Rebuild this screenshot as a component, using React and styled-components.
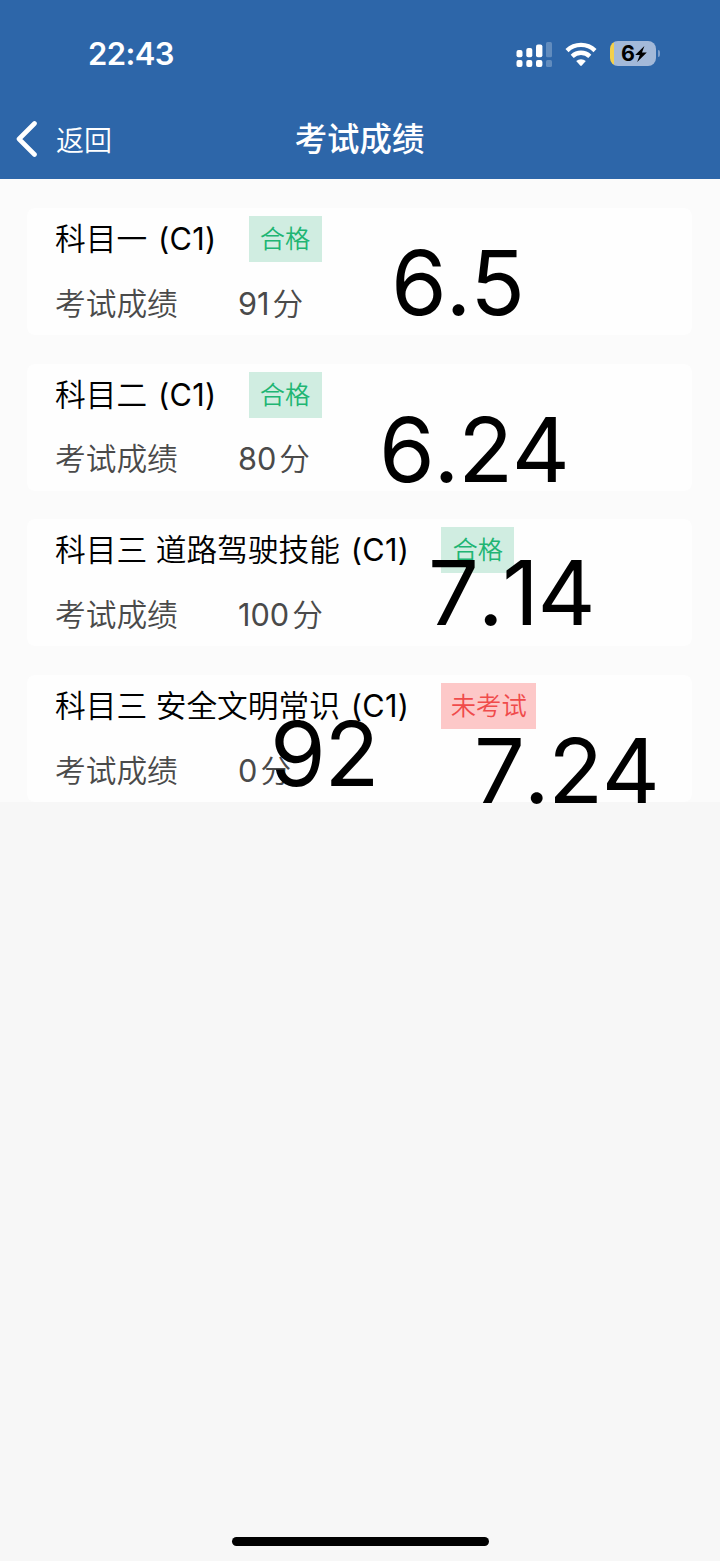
import React from 'react'
import styled, {createGlobalStyle} from 'styled-components'

const exams=[
    {
        subject:"科目一",
        type:"(C1)",
        score:91,
        passed:true,
        notes:[{text:"6.5", left:364, top:20}],
    },
    {
        subject:"科目二",
        type:"(C1)",
        score:80,
        passed:true,
        notes:[{text:"6.24", left:352, top:31}],
    },
    {
        subject:"科目三 道路驾驶技能",
        type:"(C1)",
        score:100,
        passed:true,
        notes:[{text:"7.14", left:401, top:19}],
    },
    {
        subject:"科目三 安全文明常识",
        type:"(C1)",
        score:0,
        passed:false,
        notes:[{text:"92", left:243, top:24}, {text:"7.24", left:447, top:41}],
    },
]

function StatusIcons() {
    return (
        <Icons>
            <svg width="36" height="26" viewBox="0 0 36 26" fill="#fff">
                <rect x="0.5" y="9" width="6" height="7.3" rx="2"/>
                <rect x="10.3" y="7" width="6" height="9.3" rx="2"/>
                <rect x="20" y="3.4" width="6.4" height="12.9" rx="2"/>
                <rect x="30" y="1" width="6" height="15.3" rx="1.5" opacity="0.25"/>
                <rect x="0.5" y="19" width="6" height="7" rx="2"/>
                <rect x="10.3" y="19" width="6" height="7" rx="2"/>
                <rect x="20" y="19" width="6.4" height="7" rx="2"/>
                <rect x="30" y="19" width="6" height="7" rx="1.5" opacity="0.25"/>
            </svg>
            <svg width="32" height="26" viewBox="0 0 32 26">
                <g fill="none" stroke="#fff" strokeWidth="4.4">
                    <path d="M2 9.6A20 20 0 0 1 30 9.6"/>
                    <path d="M7.2 15.4A12.6 12.6 0 0 1 24.8 15.4"/>
                </g>
                <path d="M11.2 20A7.4 7.4 0 0 1 20.8 20L16.8 24.6Q16 25.4 15.2 24.6Z" fill="#fff"/>
            </svg>
            <Battery>
                <BatteryBody>
                    <span>6</span>
                    <svg width="12" height="16" viewBox="0 0 12 16">
                        <path d="M9.4 0L0.2 9H4.8L2.2 16L11.8 6.6H7Z" fill="#000"/>
                    </svg>
                </BatteryBody>
                <BatteryTip/>
            </Battery>
        </Icons>
    )
}

function Exam({subject,type,score,passed,notes}) {
    return (
        <Card>
            <SubjectRow>
                <Subject>{subject}</Subject>
                <LicenceType>{type}</LicenceType>
                <Tag $passed={passed}>{passed ? "合格" : "未考试"}</Tag>
            </SubjectRow>
            <ScoreRow>
                <ScoreLabel>考试成绩</ScoreLabel>
                <span>{score}</span>
                <Unit>分</Unit>
            </ScoreRow>
            {notes.map((note)=>(
                <Note key={note.text} $left={note.left} $top={note.top}>{note.text}</Note>
            ))}
        </Card>
    )
}

function App() {
    return (
        <Screen>
            <GlobalStyle/>
            <Header>
                <StatusBar>
                    <Time>22:43</Time>
                    <StatusIcons/>
                </StatusBar>
                <NavBar>
                    <Back>
                        <svg width="22" height="36" viewBox="0 0 22 36">
                            <path d="M18.5 2.5L3 18L18.5 33.5" fill="none" stroke="#fff" strokeWidth="4.6" strokeLinecap="round" strokeLinejoin="round"/>
                        </svg>
                        <BackText>返回</BackText>
                    </Back>
                    <Title>考试成绩</Title>
                </NavBar>
            </Header>
            <List>
                {exams.map((exam)=>(
                    <Exam key={exam.subject} {...exam}/>
                ))}
            </List>
            <Footer>
                <HomeIndicator/>
            </Footer>
        </Screen>
    )
}

export default App

const GlobalStyle=createGlobalStyle `
* {
    box-sizing: border-box;
}
body {
    margin: 0;
    font-family: Inter, "Noto Sans CJK SC", sans-serif;
}
svg {
    display: block;
    flex-shrink: 0;
}
`

const Screen=styled.div `
    display: flex;
    flex-direction: column;
    width: 720px;
    height: 1561px;
    background: #f7f7f7;
    overflow: hidden;
`

const Header=styled.header `
    height: 179px;
    background: #2d66a9;
    color: #fff;
`

const StatusBar=styled.div `
    display: flex;
    justify-content: space-between;
    align-items: center;
    height: 107px;
    padding: 0 60px 0 88px;
`

const Time=styled.span `
    font-size: 31px;
    font-weight: 600;
    line-height: 36px;
    letter-spacing: -0.6px;
`

const Icons=styled.div `
    display: flex;
    align-items: center;
    gap: 13px;
`

const Battery=styled.div `
    display: flex;
    align-items: center;
    gap: 2px;
`

const BatteryBody=styled.div `
    display: flex;
    align-items: center;
    justify-content: center;
    width: 46px;
    height: 25px;
    padding-left: 2px;
    border-radius: 8px;
    background: linear-gradient(to right, #f3d04b 4px, #a3b9d9 4px);
    color: #000;
    font-size: 21.5px;
    font-weight: 700;
    line-height: 25px;
`

const BatteryTip=styled.div `
    width: 2px;
    height: 7px;
    border-radius: 0 2px 2px 0;
    background: #7d9fcc;
`

const NavBar=styled.div `
    display: grid;
    grid-template-columns: 1fr auto 1fr;
    align-items: center;
    height: 63px;
    padding: 0 17px 0 16px;
`

const Back=styled.div `
    display: flex;
    align-items: center;
    gap: 18px;
`

const BackText=styled.span `
    padding-top: 4px;
    font-size: 28px;
    font-weight: 350;
    line-height: 40px;
`

const Title=styled.h1 `
    margin: 0;
    padding-top: 2px;
    font-size: 32.4px;
    font-weight: 500;
    line-height: 40px;
`

const List=styled.main `
    display: flex;
    flex-direction: column;
    gap: 28.7px;
    height: 623px;
    padding: 29px 28px 0 27px;
    background: #fbfbfb;
`

const Card=styled.section `
    position: relative;
    flex: none;
    height: 127px;
    padding: 8px 28px 0;
    border-radius: 8px;
    background: #fefefe;
    color: #000;
    font-size: 30.7px;
`

const SubjectRow=styled.div `
    display: flex;
    align-items: center;
    height: 46px;
    line-height: 46px;
    white-space: nowrap;
`

const Subject=styled.span `
    font-weight: 350;
`

const LicenceType=styled.span `
    margin: 0 32px 0 11px;
    letter-spacing: 0.3px;
`

const Tag=styled.span `
    min-width: 73px;
    height: 46px;
    padding: 0 9.5px;
    background: ${(props)=>props.$passed ? "#d0ede1" : "#fdc8c8"};
    color: ${(props)=>props.$passed ? "#20b573" : "#f04b4b"};
    font-size: 25.3px;
    font-weight: 350;
    text-align: center;
`

const ScoreRow=styled.div `
    display: flex;
    align-items: center;
    height: 46px;
    margin-top: 18px;
    color: #4a4a4a;
    line-height: 47px;
`

const ScoreLabel=styled.span `
    width: 183px;
    font-weight: 350;
`

const Unit=styled.span `
    margin-left: 3px;
    font-weight: 350;
`

/* big remarks laid over the cards */
const Note=styled.span `
    position: absolute;
    z-index: 1;
    left: ${(props)=>props.$left}px;
    top: ${(props)=>props.$top}px;
    color: #000;
    font-size: 90px;
    font-kerning: none;
    letter-spacing: -1.3px;
    line-height: 109px;
    white-space: nowrap;
`

const Footer=styled.footer `
    display: flex;
    flex: 1;
    align-items: flex-end;
    justify-content: center;
    padding-bottom: 15px;
`

const HomeIndicator=styled.div `
    width: 257px;
    height: 9px;
    border-radius: 5px;
    background: #000;
`
